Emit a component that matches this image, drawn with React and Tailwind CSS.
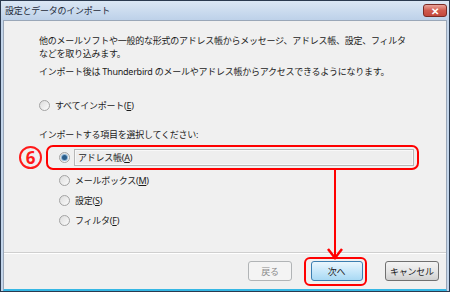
import React from "react";

const Radio = ({ checked }) => (
    <span className="relative flex h-[11px] w-[11px] shrink-0 items-center justify-center rounded-full border border-[#a3a3a3] bg-gradient-to-br from-[#dcdcdc] to-[#fcfcfc]">
        {checked && (
            <span className="h-[5px] w-[5px] rounded-full bg-[#2a5d8a] ring-1 ring-[#8fb6d8]" />
        )}
    </span>
);

const Option = ({ label, underline, checked }) => (
    <div className="flex h-5 items-center gap-[5px] pl-[55px]">
        <Radio checked={checked} />
        <span>
            {label}(<span className="underline">{underline}</span>)
        </span>
    </div>
);

const App = () => {
    return (
        <div className="relative flex h-[292px] w-[450px] flex-col overflow-hidden border border-[#2b3a4f] bg-[#c3d5ea] font-['Noto_Sans','Noto_Sans_CJK_JP',sans-serif] text-[9px] leading-[13px] tracking-[-0.25px] text-[#1b1b1b]">
            {/* title bar */}
            <div className="flex h-[19px] shrink-0 items-center justify-between bg-gradient-to-b from-[#dbe7f4] to-[#bdd1e9] pl-1 pr-[2px]">
                <span className="text-[#1e2a38]">設定とデータのインポート</span>
                <span className="flex h-[13px] w-[24px] items-center justify-center rounded-[3px] border border-[#7b2b25] bg-gradient-to-b from-[#e8a49c] via-[#cf5a4e] to-[#c3483c] text-[10px] font-bold leading-none text-white">
                    ✕
                </span>
            </div>

            {/* body */}
            <div className="mx-[2px] flex flex-1 flex-col border-x border-t border-[#9aa7b8] border-b-2 border-b-[#35b7e4] bg-[#f0f0f0]">
                <div className="pl-[35px] pt-[13px]">
                    <p>他のメールソフトや一般的な形式のアドレス帳からメッセージ、アドレス帳、設定、フィルタ</p>
                    <p>などを取り込みます。</p>
                    <p className="mt-[5px]">インポート後は Thunderbird のメールやアドレス帳からアクセスできるようになります。</p>
                </div>

                <div className="mt-[21px] flex items-center gap-[5px] pl-[35px]">
                    <Radio />
                    <span>
                        すべてインポート(<span className="underline">E</span>)
                    </span>
                </div>

                <p className="mt-[16px] pl-[35px]">インポートする項目を選択してください:</p>

                {/* highlighted row */}
                <div className="relative mt-[4px] flex items-center">
                    <span className="absolute left-[15px] top-[1px] flex h-[23px] w-[23px] items-center justify-center rounded-full border-2 border-[#ff1a1a] text-[17px] font-bold leading-none tracking-normal text-[#ff1a1a]">
                        6
                    </span>
                    <div className="ml-[42px] flex h-[25px] w-[373px] items-center gap-[4px] rounded-[7px] border-[2.5px] border-[#ff0000] pl-[11px] pr-[3px]">
                        <Radio checked />
                        <div className="flex h-[17px] flex-1 items-center border border-[#b8b8b8] bg-[#eeeeee] pl-[3px] shadow-[inset_0_0_0_1px_#f8f8f8]">
                            アドレス帳(<span className="underline">A</span>)
                        </div>
                    </div>
                </div>

                <Option label="メールボックス" underline="M" />
                <Option label="設定" underline="S" />
                <Option label="フィルタ" underline="F" />

                <div className="flex-1" />

                {/* footer */}
                <div className="border-t border-[#cfcfcf] shadow-[inset_0_1px_0_#ffffff]">
                    <div className="flex h-[36px] items-center justify-end pr-[7px]">
                        <button className="flex h-5 w-[44px] items-center justify-center rounded-[3px] border border-[#b1b4b6] bg-[#f4f4f4] text-[#8a8a8a]">
                            戻る
                        </button>
                        <div className="ml-[12px] flex rounded-[6px] border-[2.5px] border-[#ff0000] py-[2.5px] pl-[4.5px] pr-[2.5px]">
                            <button className="flex h-5 w-[52px] items-center justify-center rounded-[3px] border border-[#3c7fb1] bg-gradient-to-b from-[#eaf6fd] via-[#c8e8fa] to-[#a8d9f4] text-[#1b1b1b]">
                                次へ
                            </button>
                        </div>
                        <button className="ml-[18px] flex h-5 w-[54px] items-center justify-center rounded-[3px] border border-[#707070] bg-gradient-to-b from-[#f3f3f3] via-[#e6e6e6] to-[#d0d0d0]">
                            キャンセル
                        </button>
                    </div>
                </div>
            </div>

            {/* annotation arrow */}
            <svg className="absolute left-[326px] top-[169px]" width="16" height="90" viewBox="0 0 16 90">
                <line x1="8" y1="0" x2="8" y2="88" stroke="#ff0000" strokeWidth="2" />
                <polyline points="1,79 8,88 15,79" fill="none" stroke="#ff0000" strokeWidth="2.5" />
            </svg>
        </div>
    );
};

export default App;
